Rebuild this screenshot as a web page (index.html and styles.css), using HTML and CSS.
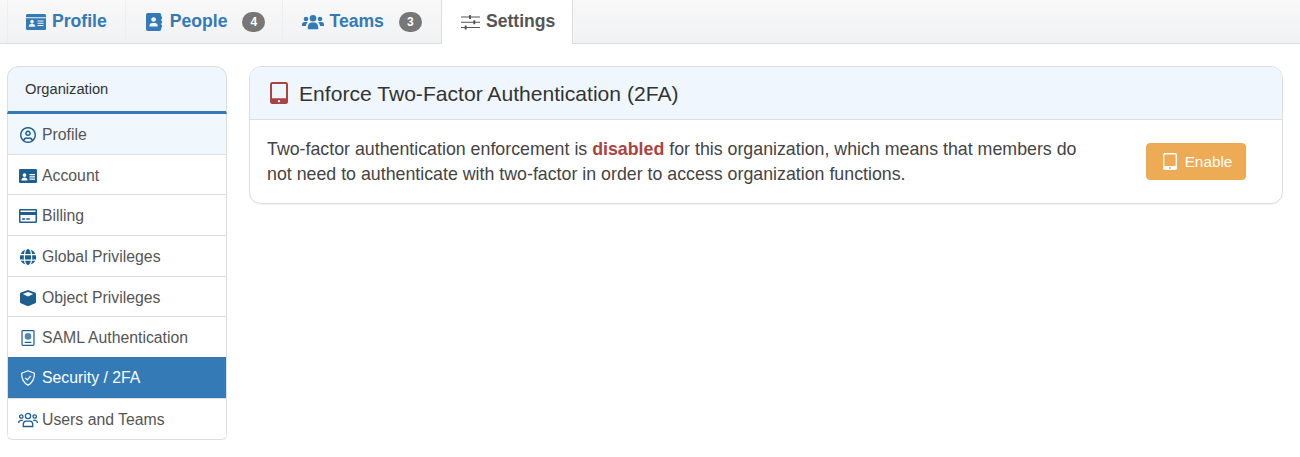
FILE: index.html
```html
<!DOCTYPE html>
<html lang="en">
<head>
    <meta charset="UTF-8">
    <meta name="viewport" content="width=device-width, initial-scale=1.0">
    <title>Organization Settings</title>
    <link rel="stylesheet" href="styles.css">
</head>
<body>
    <nav class="tabs">
        <a class="tab tab-first" href="#">
            <svg class="tab-icon icon-idcard" viewBox="0 0 20 16"><path fill-rule="evenodd" d="M1.500 0H18.500A1.500 1.500 0 0 1 20 1.500V14.500A1.500 1.500 0 0 1 18.500 16H1.500A1.500 1.500 0 0 1 0 14.500V1.500A1.500 1.500 0 0 1 1.500 0ZM0 3.200V4.200H20V3.200ZM6 5.800a1.800 1.800 0 1 0 .01 0ZM2.700 12.800H9.300C9.300 10.800 8 9.800 6 9.800S2.700 10.800 2.700 12.800ZM11.500 6.500V7.500H17.500V6.500ZM11.500 8.700V9.700H17.500V8.700ZM11.500 10.900V11.900H17.500V10.900Z"/></svg>
            Profile
        </a>
        <a class="tab" href="#">
            <svg class="tab-icon icon-book" viewBox="0 0 16 18"><path fill-rule="evenodd" d="M1.700 0H13.500A1.700 1.700 0 0 1 15.200 1.700V3.500H16V6H15.200V7.800H16V10.200H15.200V12H16V14.500H15.200V16.300A1.700 1.700 0 0 1 13.500 18H1.700A1.700 1.700 0 0 1 0 16.300V1.700A1.700 1.700 0 0 1 1.700 0ZM7.600 4.200a2.300 2.300 0 1 0 .01 0ZM3.500 13.500H11.700V12.600C11.700 11 10.500 9.900 9.200 9.900H6C4.700 9.900 3.500 11 3.500 12.600Z"/></svg>
            People
            <span class="badge">4</span>
        </a>
        <a class="tab tab-teams" href="#">
            <svg class="tab-icon icon-team" viewBox="0 0 22 16"><circle cx="11" cy="4.200" r="3.300"/><circle cx="4" cy="5" r="2.300"/><circle cx="18" cy="5" r="2.300"/><path d="M5.800 15.200V13C5.800 10.500 7.600 8.600 9.500 8.600H12.500C14.400 8.600 16.200 10.500 16.200 13V15.200ZM0 12V10.300C0 9 1 8 2.200 8H5C5.400 8 5.600 8.100 5.800 8.300 4.700 9.200 4.100 10.500 4 12ZM22 12V10.300C22 9 21 8 19.800 8H17C16.600 8 16.400 8.100 16.200 8.300 17.300 9.200 17.900 10.500 18 12Z"/></svg>
            Teams
            <span class="badge">3</span>
        </a>
        <a class="tab active" href="#">
            <svg class="tab-icon icon-sliders" viewBox="0 0 19 16"><path d="M0 2.400H19V3.500H0ZM0 7.700H19V8.800H0ZM0 13H19V14.100H0Z"/><rect x="8" y="1" width="2" height="4" rx=".5"/><rect x="12.300" y="6.300" width="2" height="4" rx=".5"/><rect x="3.700" y="11.600" width="2" height="4" rx=".5"/></svg>
            Settings
        </a>
    </nav>

    <div class="page">
        <aside class="sidebar">
            <div class="sidebar-title">Organization</div>
            <a class="side-item hover" href="#">
                <svg class="side-icon" viewBox="0 0 16 16"><path fill-rule="evenodd" d="M8 0a8 8 0 1 0 .01 0ZM8 1.500a6.500 6.500 0 0 1 4.800 10.900C12 11 10.800 10.300 9.700 10.300 9.200 10.500 8.600 10.600 8 10.600S6.800 10.500 6.300 10.300C5.200 10.300 4 11 3.200 12.400A6.500 6.500 0 0 1 8 1.500ZM8 3.500a2.800 2.800 0 1 0 .01 0ZM8 5a1.300 1.300 0 1 1-.01 0ZM8 12c.7 0 1.200-.1 1.700-.2.500.1 1 .5 1.900 1.600A6.500 6.500 0 0 1 4.400 13.400C5.300 12.300 5.800 11.900 6.300 11.800 6.800 11.900 7.300 12 8 12Z"/></svg>
                Profile
            </a>
            <a class="side-item" href="#">
                <svg class="side-icon" viewBox="0 0 18 14"><path fill-rule="evenodd" d="M1.300 0H16.700A1.300 1.300 0 0 1 18 1.300V12.700A1.300 1.300 0 0 1 16.700 14H1.300A1.300 1.300 0 0 1 0 12.700V1.300A1.300 1.300 0 0 1 1.300 0ZM5.500 4.300a1.800 1.800 0 1 1-.01 0ZM2.400 11.500C2.400 9.700 3.600 8.500 5.500 8.500S8.600 9.700 8.600 11.500ZM10.500 5H16V6.200H10.500ZM10.500 7.300H16V8.500H10.500ZM10.500 9.600H16V10.800H10.500Z"/></svg>
                Account
            </a>
            <a class="side-item" href="#">
                <svg class="side-icon" viewBox="0 0 18 14"><path fill-rule="evenodd" d="M1.300 0H16.700A1.300 1.300 0 0 1 18 1.300V12.700A1.300 1.300 0 0 1 16.700 14H1.300A1.300 1.300 0 0 1 0 12.700V1.300A1.300 1.300 0 0 1 1.300 0ZM1.500 1.500V3H16.500V1.500ZM1.500 6V12.500H16.500V6ZM3 9.300H6.200V10.700H3ZM7.300 9.300H10.800V10.700H7.300Z"/></svg>
                Billing
            </a>
            <a class="side-item" href="#">
                <svg class="side-icon" viewBox="0 0 16 16"><path d="M8 0C6.800 0 5.600 1.900 5.200 5H10.800C10.400 1.900 9.200 0 8 0ZM4.900 8C4.900 8.900 5 9.800 5.100 10.500H10.900C11 9.800 11.100 8.900 11.100 8S11 6.900 10.900 6.200H5.100C5 6.900 4.900 7.100 4.900 8ZM5.200 11.700C5.600 14.100 6.800 16 8 16S10.400 14.100 10.800 11.700ZM5.400.4A8 8 0 0 0 .6 5H4C4.200 3 4.700 1.400 5.400.4ZM10.600.4C11.300 1.400 11.800 3 12 5H15.400A8 8 0 0 0 10.600.4ZM.2 6.200A8 8 0 0 0 .2 10.500H3.900A26 26 0 0 1 3.900 6.200ZM12.100 6.200A26 26 0 0 1 12.100 10.500H15.800A8 8 0 0 0 15.800 6.200ZM.6 11.700A8 8 0 0 0 5.400 15.600C4.700 14.600 4.200 13.300 4 11.700ZM12 11.700C11.800 13.300 11.300 14.600 10.600 15.600A8 8 0 0 0 15.400 11.700Z"/></svg>
                Global Privileges
            </a>
            <a class="side-item" href="#">
                <svg class="side-icon" viewBox="0 0 16 16"><path fill-rule="evenodd" d="M8 0 15 2.600A1.500 1.500 0 0 1 16 4V11.900A1.500 1.500 0 0 1 15.200 13.200L8.700 16H7.300L.8 13.200A1.500 1.500 0 0 1 0 11.900V4A1.500 1.500 0 0 1 1 2.600ZM2.800 4.100 8 6.500 13.200 4.100 8 2Z"/></svg>
                Object Privileges
            </a>
            <a class="side-item" href="#">
                <svg class="side-icon" viewBox="0 0 14 17"><path fill-rule="evenodd" d="M1.500 0H12.500A1.500 1.500 0 0 1 14 1.500V15.500A1.500 1.500 0 0 1 12.500 17H1.500A1.500 1.500 0 0 1 0 15.500V1.500A1.500 1.500 0 0 1 1.500 0ZM1.300 1.300V15.700H12.700V1.300ZM3.500 12.500H10.500V13.800H3.500Z"/><circle cx="7" cy="6.800" r="3.500" opacity=".75"/></svg>
                SAML Authentication
            </a>
            <a class="side-item selected" href="#">
                <svg class="side-icon" viewBox="0 0 16 17"><path d="M8 .8 14.800 3.400C14.900 9 12.500 13.600 8 16.100 3.500 13.600 1.100 9 1.200 3.400Z" fill="none" stroke="currentColor" stroke-width="1.300" stroke-linejoin="round"/><path d="M5 8.300 7.200 10.500 11.100 6.300" fill="none" stroke="currentColor" stroke-width="1.300"/></svg>
                Security / 2FA
            </a>
            <a class="side-item" href="#">
                <svg class="side-icon icon-wide" viewBox="0 0 20 15" fill="none" stroke="currentColor" stroke-width="1.300"><circle cx="10" cy="3.500" r="2.600"/><circle cx="3.300" cy="4" r="1.700"/><circle cx="16.700" cy="4" r="1.700"/><path d="M5.300 14V11.800C5.300 9.900 6.600 8.600 8 8.600H12C13.400 8.600 14.700 9.900 14.700 11.800V14ZM.6 10.500C.6 8.900 1.500 7.800 2.800 7.800H4.800M19.400 10.500C19.400 8.900 18.500 7.800 17.200 7.800H15.200"/></svg>
                Users and Teams
            </a>
        </aside>

        <main class="panel">
            <div class="panel-head">
                <svg class="head-icon" viewBox="0 0 18 22"><path fill-rule="evenodd" d="M2.300 0H15.700A2.300 2.300 0 0 1 18 2.300V19.700A2.300 2.300 0 0 1 15.700 22H2.300A2.300 2.300 0 0 1 0 19.700V2.300A2.300 2.300 0 0 1 2.300 0ZM2 2V16.300H16V2ZM9 17.900a1.200 1.200 0 1 0 .01 0Z"/></svg>
                <h1>Enforce Two-Factor Authentication (2FA)</h1>
            </div>
            <div class="panel-body">
                <p>Two-factor authentication enforcement is <strong>disabled</strong> for this organization, which means that members do not need to authenticate with two-factor in order to access organization functions.</p>
                <button class="btn-enable" type="button">
                    <svg class="btn-icon" viewBox="0 0 14 17"><path fill-rule="evenodd" d="M1.700 0H12.300A1.700 1.700 0 0 1 14 1.700V15.300A1.700 1.700 0 0 1 12.300 17H1.700A1.700 1.700 0 0 1 0 15.300V1.700A1.700 1.700 0 0 1 1.700 0ZM1.400 1.400V13H12.600V1.400ZM7 14a1 1 0 1 0 .01 0Z"/></svg>
                    Enable
                </button>
            </div>
        </main>
    </div>
</body>
</html>
```

FILE: styles.css
```css
* {
    box-sizing: border-box;
    margin: 0;
    padding: 0;
}
body {
    background-color: #fff;
    color: #333;
    font-family: 'Liberation Sans', Arial, sans-serif;
}
a {
    text-decoration: none;
}

/* top tabs */
.tabs {
    display: flex;
    height: 44px;
    padding-left: 7px;
    background: linear-gradient(to bottom, #f8f8f8, #f1f2f4);
    border-bottom: 1px solid #ddd;
}
.tab {
    display: flex;
    align-items: center;
    height: 43px;
    padding: 0 17px 0 20px;
    border-left: 1px solid #eeeeee;
    color: #337ab7;
    font-size: 17.6px;
    font-weight: bold;
}
.tab-first {
    padding: 0 18px;
}
.tab-teams {
    padding: 0 19px;
}
.tab.active {
    height: 44px;
    padding: 0 17px 1px 19px;
    background-color: #fff;
    border-left: 1px solid #ddd;
    border-right: 1px solid #ddd;
    color: #555;
}
.tab-icon {
    fill: currentColor;
    margin-right: 6px;
}
.icon-idcard {
    width: 20px;
    height: 16px;
}
.icon-book {
    width: 16px;
    height: 18px;
    margin-right: 8px;
}
.icon-team {
    width: 22px;
    height: 16px;
    margin-right: 5px;
}
.icon-sliders {
    width: 19px;
    height: 16px;
}
.badge {
    display: block;
    width: 23px;
    height: 20px;
    margin-left: 15px;
    border-radius: 10px;
    background-color: #777;
    color: #fff;
    font-size: 12px;
    font-weight: bold;
    line-height: 20px;
    text-align: center;
}

.page {
    display: flex;
    align-items: flex-start;
    gap: 22px;
    padding: 22px 17px 0 7px;
}

/* left menu */
.sidebar {
    flex: 0 0 220px;
    height: 374px;
    overflow: hidden;
    border-bottom: 1px solid #ddd;
    border-bottom-left-radius: 6px;
    border-bottom-right-radius: 6px;
    box-shadow: 0 1px 1px rgba(0, 0, 0, 0.06);
}
.sidebar-title {
    height: 48px;
    padding: 14px 0 0 17px;
    background-color: #eff6fd;
    border: 1px solid #ddd;
    border-bottom: 3px solid #337ab7;
    border-top-left-radius: 12px;
    border-top-right-radius: 12px;
    font-size: 14.7px;
}
.side-item {
    display: flex;
    align-items: center;
    height: 40.7px;
    padding: 2px 0 0 11px;
    border: 1px solid #ddd;
    border-width: 0 1px 1px;
    color: #555;
    font-size: 15.8px;
}
.side-item:last-child {
    border-width: 0 1px;
    /* side lines fade out above the bottom edge */
    border-image: linear-gradient(to bottom, #ddd 75%, #fff) 1;
}
.side-item.hover {
    background-color: #f0f8fe;
}
.side-item.selected {
    height: 41.7px;
    margin-top: -1px;
    background-color: #337ab7;
    border-bottom-color: #ddd;
    color: #fff;
}
.side-icon {
    flex: 0 0 18px;
    width: 18px;
    height: 16px;
    margin-right: 5px;
    fill: #1d5f8f;
}
.selected .side-icon {
    fill: none;
    color: #fff;
}
.side-item .icon-wide {
    color: #1d5f8f;
    fill: none;
    flex-basis: 20px;
    width: 20px;
    margin-left: -1px;
    margin-right: 4px;
}

/* main panel */
.panel {
    flex: 1;
    height: 138px;
    border: 1px solid #ddd;
    border-radius: 12px;
    overflow: hidden;
    box-shadow: 0 1px 1px rgba(0, 0, 0, 0.05);
}
.panel-head {
    display: flex;
    align-items: center;
    height: 53px;
    padding-left: 20px;
    background-color: #eff6fd;
    border-bottom: 1px solid #ddd;
}
.head-icon {
    width: 18px;
    height: 22px;
    margin-right: 11px;
    fill: #a94442;
}
h1 {
    padding-top: 1px;
    font-size: 21.1px;
    font-weight: normal;
}
.panel-body {
    display: flex;
    align-items: flex-start;
    justify-content: space-between;
    padding: 17px 36px 0 17px;
}
.panel-body p {
    width: 830px;
    color: #444;
    font-size: 17.8px;
    line-height: 25px;
}
.panel-body strong {
    color: #a94442;
}
.btn-enable {
    display: flex;
    align-items: center;
    justify-content: center;
    width: 100px;
    height: 37px;
    margin-top: 6px;
    padding-left: 3px;
    background-color: #eeab55;
    border: 1px solid #eba84f;
    border-radius: 4px;
    color: #fff;
    font-family: inherit;
    font-size: 15.3px;
}
.btn-icon {
    width: 14px;
    height: 17px;
    margin-right: 8px;
    fill: #fff;
}
```
